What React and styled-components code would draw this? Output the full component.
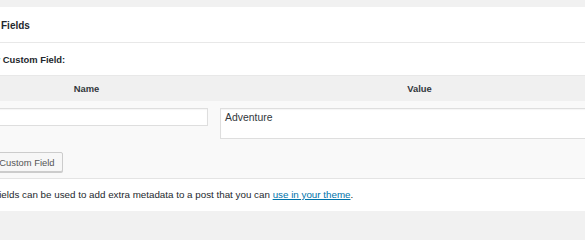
import React from "react";
import styled, { createGlobalStyle } from "styled-components";

const GlobalStyle = createGlobalStyle`
    body {
        margin: 0;
        background: #f1f1f1;
        overflow: hidden;
        font-family: "Liberation Sans", Arial, sans-serif;
        color: #23282d;
    }
`

const App = () => {
    return (
        <>
            <GlobalStyle />
            <Page>
                <Postbox>
                    <Handle>Custom Fields</Handle>
                    <Inside>
                        <NewTitle>Add New Custom Field:</NewTitle>
                        <Table>
                            <thead>
                                <tr>
                                    <Th $width="38%">Name</Th>
                                    <Th>Value</Th>
                                </tr>
                            </thead>
                            <tbody>
                                <tr>
                                    <Td $left>
                                        <NameInput type="text" defaultValue="" />
                                    </Td>
                                    <Td>
                                        <ValueArea defaultValue="Adventure" />
                                    </Td>
                                </tr>
                                <tr>
                                    <SubmitCell colSpan={2}>
                                        <Button type="button">Add Custom Field</Button>
                                    </SubmitCell>
                                </tr>
                            </tbody>
                        </Table>
                        <Note>
                            Custom fields can be used to add extra metadata to a post that you can{" "}
                            <a href="#theme">use in your theme</a>.
                        </Note>
                    </Inside>
                </Postbox>
            </Page>
        </>
    );
}

const Page = styled.div`
    padding-top: 7px;
`
const Postbox = styled.div`
    margin-left: -52px;
    width: 690px;
    background: #fff;
`
const Handle = styled.h2`
    margin: 0;
    height: 36px;
    box-sizing: border-box;
    padding: 1px 13px 0;
    display: flex;
    align-items: center;
    border-bottom: 1px solid #e8e8e8;
    font-size: 10px;
    font-weight: 700;
    color: #23282d;
`
const Inside = styled.div`
    padding: 0 12px;
`
const NewTitle = styled.p`
    margin: 0;
    height: 33px;
    box-sizing: border-box;
    display: flex;
    align-items: center;
    font-size: 9.4px;
    font-weight: 700;
    border-bottom: 1px solid #e8e8e8;
`
const Table = styled.table`
    width: 100%;
    border-collapse: collapse;
    border-spacing: 0;
    background: #f9f9f9;
    border-bottom: 1px solid #e4e4e4;
`
const Th = styled.th`
    width: ${(p) => p.$width || "auto"};
    height: 25px;
    padding: 0;
    background: #f0f0f0;
    font-size: 9.4px;
    font-weight: 700;
    color: #32373c;
    text-align: center;
`
const Td = styled.td`
    padding: 7px ${(p) => (p.$left ? "5px" : "6px")} 0 ${(p) => (p.$left ? "8px" : "7px")};
    vertical-align: top;
`
const NameInput = styled.input`
    display: block;
    width: 100%;
    height: 18px;
    box-sizing: border-box;
    margin: 0;
    border: 1px solid #dedede;
    background: #fff;
    box-shadow: inset 0 1px 1px rgba(0, 0, 0, 0.04);
    font: inherit;
    font-size: 9.4px;
`
const ValueArea = styled.textarea`
    display: block;
    width: 100%;
    height: 31px;
    box-sizing: border-box;
    margin: 0;
    padding: 3px 4px;
    border: 1px solid #dedede;
    background: #fff;
    box-shadow: inset 0 1px 1px rgba(0, 0, 0, 0.04);
    resize: none;
    font-family: "Liberation Sans", Arial, sans-serif;
    font-size: 10.4px;
    color: #32373c;
`
const SubmitCell = styled.td`
    padding: 13px 12px 6px;
`
const Button = styled.button`
    display: block;
    height: 20px;
    padding: 0 7px;
    border: 1px solid #cccccc;
    border-radius: 2px;
    background: #f7f7f7;
    box-shadow: 0 1px 0 #cccccc;
    font-family: "Liberation Sans", Arial, sans-serif;
    font-size: 9.4px;
    color: #555;
`
const Note = styled.p`
    margin: 0;
    height: 32px;
    line-height: 32px;
    font-size: 9.8px;
    color: #23282d;
    white-space: nowrap;

    & a {
        color: #0073aa;
        text-decoration: underline;
    }
`

export default App;
